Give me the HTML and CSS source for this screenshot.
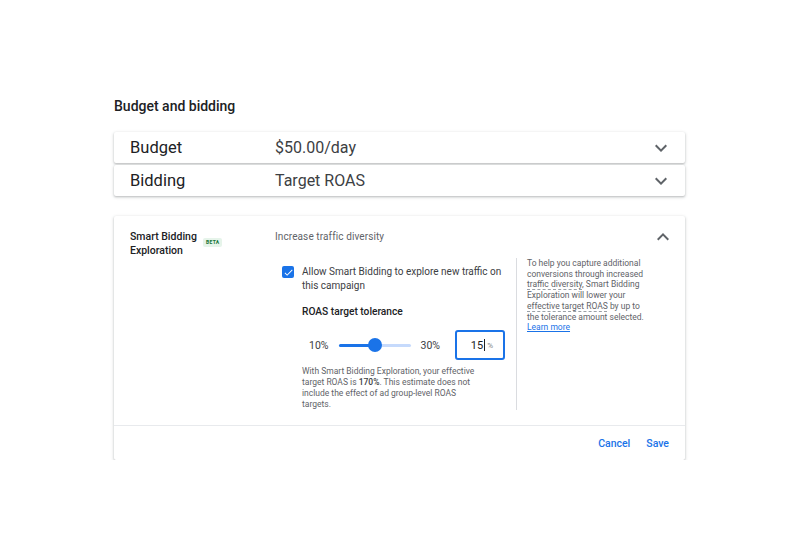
FILE: index.html
```html
<!DOCTYPE html>
<html lang="en">
<head>
    <meta charset="UTF-8">
    <title>Budget and bidding</title>
    <link rel="stylesheet" href="styles.css">
</head>
<body>
    <div class="page">
        <h1 class="section-title">Budget and bidding</h1>

        <div class="panel row">
            <div class="row-label">Budget</div>
            <div class="row-value">$50.00/day</div>
            <svg class="chevron" viewBox="0 0 24 24"><path d="M16.59 8.59L12 13.17 7.41 8.59 6 10l6 6 6-6z"/></svg>
        </div>
        <div class="panel row">
            <div class="row-label">Bidding</div>
            <div class="row-value">Target ROAS</div>
            <svg class="chevron" viewBox="0 0 24 24"><path d="M16.59 8.59L12 13.17 7.41 8.59 6 10l6 6 6-6z"/></svg>
        </div>

        <div class="panel expanded">
            <div class="expanded-body">
                <div class="exp-label">
                    <span class="exp-name">Smart Bidding Exploration</span>
                    <span class="badge">BETA</span>
                </div>
                <div class="exp-content">
                    <div class="exp-summary">Increase traffic diversity</div>
                    <div class="exp-columns">
                        <div class="exp-main">
                            <label class="check-row">
                                <span class="checkbox">
                                    <svg viewBox="0 0 24 24"><path d="M9 16.17L4.83 12l-1.42 1.41L9 19 21 7l-1.41-1.41z"/></svg>
                                </span>
                                <span>Allow Smart Bidding to explore new traffic on this campaign</span>
                            </label>

                            <div class="field-title">ROAS target tolerance</div>

                            <div class="slider-row">
                                <span class="slider-end">10%</span>
                                <div class="slider">
                                    <div class="slider-fill"></div>
                                    <div class="slider-thumb"></div>
                                </div>
                                <span class="slider-end">30%</span>
                                <div class="pct-input">
                                    <span class="pct-value">15</span><span class="caret"></span><span class="pct-unit">%</span>
                                </div>
                            </div>

                            <p class="hint">With Smart Bidding Exploration, your effective target ROAS is <b>170%</b>. This estimate does not include the effect of ad group-level ROAS targets.</p>
                        </div>
                        <div class="exp-side">
                            To help you capture additional conversions through increased <span class="term">traffic diversity</span>, Smart Bidding Exploration will lower your <span class="term">effective target ROAS</span> by up to the tolerance amount selected.
                            <a href="#" class="link">Learn more</a>
                        </div>
                    </div>
                </div>
                <svg class="chevron" viewBox="0 0 24 24"><path d="M7.41 15.41L12 10.83l4.59 4.58L18 14l-6-6-6 6z"/></svg>
            </div>
            <div class="actions">
                <button class="text-btn">Cancel</button>
                <button class="text-btn">Save</button>
            </div>
        </div>
    </div>
</body>
</html>
```

FILE: styles.css
```css
body {
    margin: 0;
    background: #fff;
    font-family: Roboto, "Liberation Sans", Arial, sans-serif;
    color: #202124;
}

.page {
    width: 571px;
    margin-left: 114px;
    padding-top: 96px;
}

.section-title {
    margin: 0 0 16px;
    font-size: 14px;
    line-height: 20px;
    font-weight: 500;
    color: #202124;
}

.panel {
    background: #fff;
    border-radius: 2px;
    box-shadow: 0 1px 2px rgba(60, 64, 67, 0.25), 0 1px 3px 1px rgba(60, 64, 67, 0.1);
}

.row {
    display: grid;
    grid-template-columns: 145px 1fr 24px;
    align-items: center;
    height: 31px;
    padding: 0 12px 0 16px;
    margin-bottom: 2px;
}

.row-label {
    font-size: 16.5px;
    color: #202124;
}

.row-value {
    font-size: 16px;
    color: #3c4043;
}

.chevron {
    width: 24px;
    height: 24px;
    fill: #5f6368;
}

.expanded {
    margin-top: 20px;
}

.expanded-body {
    display: grid;
    grid-template-columns: 145px 1fr 24px;
    padding: 14px 12px 15px 16px;
    align-items: start;
}

.expanded-body .chevron {
    margin-top: -5px;
}

.exp-label {
    display: flex;
    align-items: flex-start;
}

.exp-name {
    width: 68px;
    font-size: 10.5px;
    line-height: 14px;
    font-weight: 500;
    color: #202124;
}

.badge {
    margin: 8px 0 0 5px;
    padding: 0 3px;
    height: 9px;
    line-height: 9px;
    font-size: 5px;
    font-weight: 700;
    letter-spacing: 0.3px;
    color: #137333;
    background: #e6f4ea;
    border-radius: 2px;
}

.exp-summary {
    font-size: 10px;
    line-height: 14px;
    color: #5f6368;
    letter-spacing: 0.1px;
}

.exp-columns {
    display: flex;
    margin-top: 14px;
}

.exp-main {
    width: 234px;
    padding-left: 7px;
    border-right: 1px solid #dadce0;
}

.check-row {
    display: flex;
    align-items: flex-start;
    margin-top: 7px;
    font-size: 10px;
    line-height: 14px;
    color: #3c4043;
}

.checkbox {
    flex: none;
    width: 12px;
    height: 12px;
    margin: 1px 8px 0 0;
    border-radius: 2px;
    background: #1a73e8;
    display: flex;
    align-items: center;
    justify-content: center;
}

.checkbox svg {
    width: 11px;
    height: 11px;
    fill: #fff;
}

.field-title {
    margin: 12px 0 0 20px;
    font-size: 10.2px;
    line-height: 14px;
    font-weight: 500;
    color: #202124;
}

.slider-row {
    display: flex;
    align-items: center;
    height: 30px;
    margin: 11px 0 0 27px;
}

.slider-end {
    font-size: 10.5px;
    color: #3c4043;
}

.slider {
    position: relative;
    width: 72px;
    height: 3px;
    margin: 0 10px;
    background: #c6dafc;
    border-radius: 2px;
}

.slider-fill {
    width: 36px;
    height: 100%;
    background: #1a73e8;
    border-radius: 2px;
}

.slider-thumb {
    position: absolute;
    left: 29px;
    top: -6px;
    width: 14px;
    height: 14px;
    border-radius: 50%;
    background: #1a73e8;
}

.pct-input {
    display: flex;
    align-items: center;
    justify-content: flex-end;
    box-sizing: border-box;
    width: 50px;
    height: 30px;
    margin-left: 15px;
    padding-right: 10px;
    border: 2px solid #1a73e8;
    border-radius: 3px;
}

.pct-value {
    font-size: 11px;
    color: #202124;
}

.caret {
    width: 1px;
    height: 12px;
    background: #202124;
    margin: 0 2px 0 1px;
}

.pct-unit {
    font-size: 8px;
    color: #80868b;
}

.hint {
    margin: 6px 0 0 20px;
    width: 184px;
    font-size: 8.5px;
    line-height: 11px;
    color: #5f6368;
}

.hint b {
    font-weight: 500;
    color: #3c4043;
}

.exp-side {
    width: 124px;
    padding-left: 10px;
    margin-top: 0;
    font-size: 8.5px;
    line-height: 10.7px;
    color: #5f6368;
}

.term {
    text-decoration: underline dashed #9aa0a6;
    text-underline-offset: 2px;
}

.link {
    color: #1a73e8;
}

.actions {
    display: flex;
    justify-content: flex-end;
    gap: 16px;
    height: 34px;
    align-items: center;
    padding-right: 16px;
    border-top: 1px solid #e8eaed;
}

.text-btn {
    border: none;
    background: none;
    padding: 0;
    font-family: inherit;
    font-size: 10.5px;
    font-weight: 500;
    color: #1a73e8;
    cursor: pointer;
}
```
